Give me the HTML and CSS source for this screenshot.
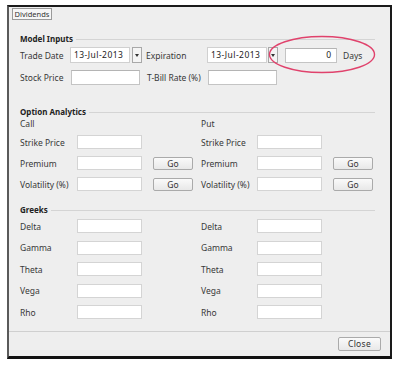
FILE: index.html
```html
<!DOCTYPE html>
<html lang="en">
  <head>
    <meta charset="UTF-8" />
    <title>Dividends</title>
  <link rel="stylesheet" href="styles.css">
  </head>
  <body>
    <div class="window">
      <div class="tabbar">
        <span class="tab">Dividends</span>
      </div>
      <div class="content">
        <div class="section-title">Model Inputs</div>
        <div class="row first">
          <span class="lbl w50">Trade Date</span>
          <span class="field date">13-Jul-2013</span>
          <span class="arrow"></span>
          <span class="lbl exp">Expiration</span>
          <span class="field date">13-Jul-2013</span>
          <span class="arrow near"></span>
          <span class="field days">0</span>
          <span class="lbl">Days</span>
        </div>
        <div class="row second">
          <span class="lbl w51">Stock Price</span>
          <span class="field wide"></span>
          <span class="lbl tbill">T-Bill Rate (%)</span>
          <span class="field wide"></span>
        </div>

        <div class="section-title analytics">Option Analytics</div>
        <div class="cols">
          <div class="col">
            <div class="sub">Call</div>
            <div class="frow"><span class="lbl w57">Strike Price</span><span class="field box"></span></div>
            <div class="frow"><span class="lbl w57">Premium</span><span class="field box"></span><span class="btn go">Go</span></div>
            <div class="frow"><span class="lbl w57">Volatility (%)</span><span class="field box"></span><span class="btn go">Go</span></div>
          </div>
          <div class="col">
            <div class="sub">Put</div>
            <div class="frow"><span class="lbl w56">Strike Price</span><span class="field box"></span></div>
            <div class="frow"><span class="lbl w56">Premium</span><span class="field box"></span><span class="btn go">Go</span></div>
            <div class="frow"><span class="lbl w56">Volatility (%)</span><span class="field box"></span><span class="btn go">Go</span></div>
          </div>
        </div>

        <div class="section-title greeks">Greeks</div>
        <div class="cols">
          <div class="col">
            <div class="grow"><span class="lbl w57">Delta</span><span class="field box"></span></div>
            <div class="grow"><span class="lbl w57">Gamma</span><span class="field box"></span></div>
            <div class="grow"><span class="lbl w57">Theta</span><span class="field box"></span></div>
            <div class="grow"><span class="lbl w57">Vega</span><span class="field box"></span></div>
            <div class="grow"><span class="lbl w57">Rho</span><span class="field box"></span></div>
          </div>
          <div class="col">
            <div class="grow"><span class="lbl w56">Delta</span><span class="field box"></span></div>
            <div class="grow"><span class="lbl w56">Gamma</span><span class="field box"></span></div>
            <div class="grow"><span class="lbl w56">Theta</span><span class="field box"></span></div>
            <div class="grow"><span class="lbl w56">Vega</span><span class="field box"></span></div>
            <div class="grow"><span class="lbl w56">Rho</span><span class="field box"></span></div>
          </div>
        </div>
      </div>
      <div class="footer">
        <span class="btn close">Close</span>
      </div>
      <!-- annotation circled around the Days field -->
      <svg class="mark" width="108" height="39" viewBox="0 0 108 39">
        <ellipse cx="54" cy="19.5" rx="52.5" ry="18" fill="none" stroke="#e0426c" stroke-width="1.4"/>
      </svg>
    </div>
  </body>
</html>
```

FILE: styles.css
```css
body {
  margin: 0;
  background: #fff;
  font-family: "Noto Sans", "DejaVu Sans", sans-serif;
  font-size: 8.5px;
  color: #383838;
}
.window {
  position: relative;
  margin: 5px 0 0 7px;
  width: 381px;
  height: 349px;
  background: #eeeeee;
  border-top: 2px solid #1a1a1a;
  border-left: 2px solid #5a5a5a;
  border-right: 2px solid #1a1a1a;
  border-bottom: 3px solid #111;
  display: flex;
  flex-direction: column;
}
.tabbar {
  padding: 1px 0 0 3px;
  height: 13px;
}
.tab {
  display: inline-block;
  box-sizing: border-box;
  width: 40px;
  height: 12px;
  line-height: 10px;
  font-size: 7.5px;
  text-align: center;
  color: #333;
  background: #f6f6f6;
  border: 1px solid #9a9a9a;
}
.content {
  flex: 1;
  padding: 0 15px 0 11px;
}
.section-title {
  display: flex;
  align-items: center;
  height: 12px;
  margin-top: 11px;
  font-weight: bold;
  font-size: 8px;
  color: #222;
}
.section-title::after {
  content: "";
  flex: 1;
  margin-left: 3px;
  margin-top: 3px;
  border-top: 1px solid #d4d4d4;
}
.section-title.analytics { margin-top: 20px; }
.section-title.greeks { margin-top: 12px; }
.row {
  display: flex;
  align-items: center;
  height: 16px;
}
.row.first { margin-top: 3px; }
.row.second { margin-top: 6px; }
.lbl { white-space: nowrap; }
.w50 { width: 50px; }
.w51 { width: 51px; }
.w56 { width: 56px; }
.w57 { width: 57px; }
.exp { width: 61px; }
.tbill { width: 61px; margin-left: 7px; }
.field {
  box-sizing: border-box;
  display: inline-block;
  background: #fff;
  border: 1px solid #c4c4c4;
  border-top-color: #b4b4b4;
  height: 14px;
  line-height: 12px;
  color: #222;
}
.date {
  width: 60px;
  height: 16px;
  line-height: 14px;
  padding-left: 3px;
  letter-spacing: 0.45px;
  border-color: #d0d0d0;
}
.arrow {
  position: relative;
  box-sizing: border-box;
  width: 10px;
  height: 16px;
  margin: 0 4px 0 2px;
  background: #f4f4f4;
  border: 1px solid #a8a8a8;
}
.arrow.near { margin: 0 7px 0 1px; }
.arrow::after {
  content: "";
  position: absolute;
  left: 2px;
  top: 6px;
  border-left: 2px solid transparent;
  border-right: 2px solid transparent;
  border-top: 3px solid #333;
}
.days {
  width: 52px;
  height: 15px;
  text-align: right;
  padding-right: 5px;
  margin-right: 6px;
}
.wide { width: 69px; height: 15px; }
.cols { display: flex; }
.col { width: 181px; flex-shrink: 0; }
.sub { height: 12px; line-height: 12px; margin-top: 1px; }
.frow, .grow {
  display: flex;
  align-items: center;
  height: 14px;
  margin-top: 7px;
}
.frow:nth-child(2) { margin-top: 5px; }
.grow { margin-top: 7.5px; }
.grow:first-child { margin-top: 4px; }
.box { width: 65px; height: 14px; border-color: #d4d4d4; }
.btn {
  box-sizing: border-box;
  display: inline-block;
  height: 13px;
  line-height: 11px;
  text-align: center;
  background: linear-gradient(#fafafa, #e8e8e8);
  border: 1px solid #aaa;
  border-radius: 2px;
  color: #333;
}
.go { width: 40px; margin-left: 11px; font-size: 8.5px; }
.footer {
  height: 25px;
  border-top: 1px solid #cfcfcf;
  display: flex;
  justify-content: flex-end;
  padding: 5px 9px 0 0;
  box-sizing: border-box;
}
.close { width: 43px; height: 14px; line-height: 12px; letter-spacing: 0.3px; }
.mark {
  position: absolute;
  left: 259px;
  top: 28px;
}
```
